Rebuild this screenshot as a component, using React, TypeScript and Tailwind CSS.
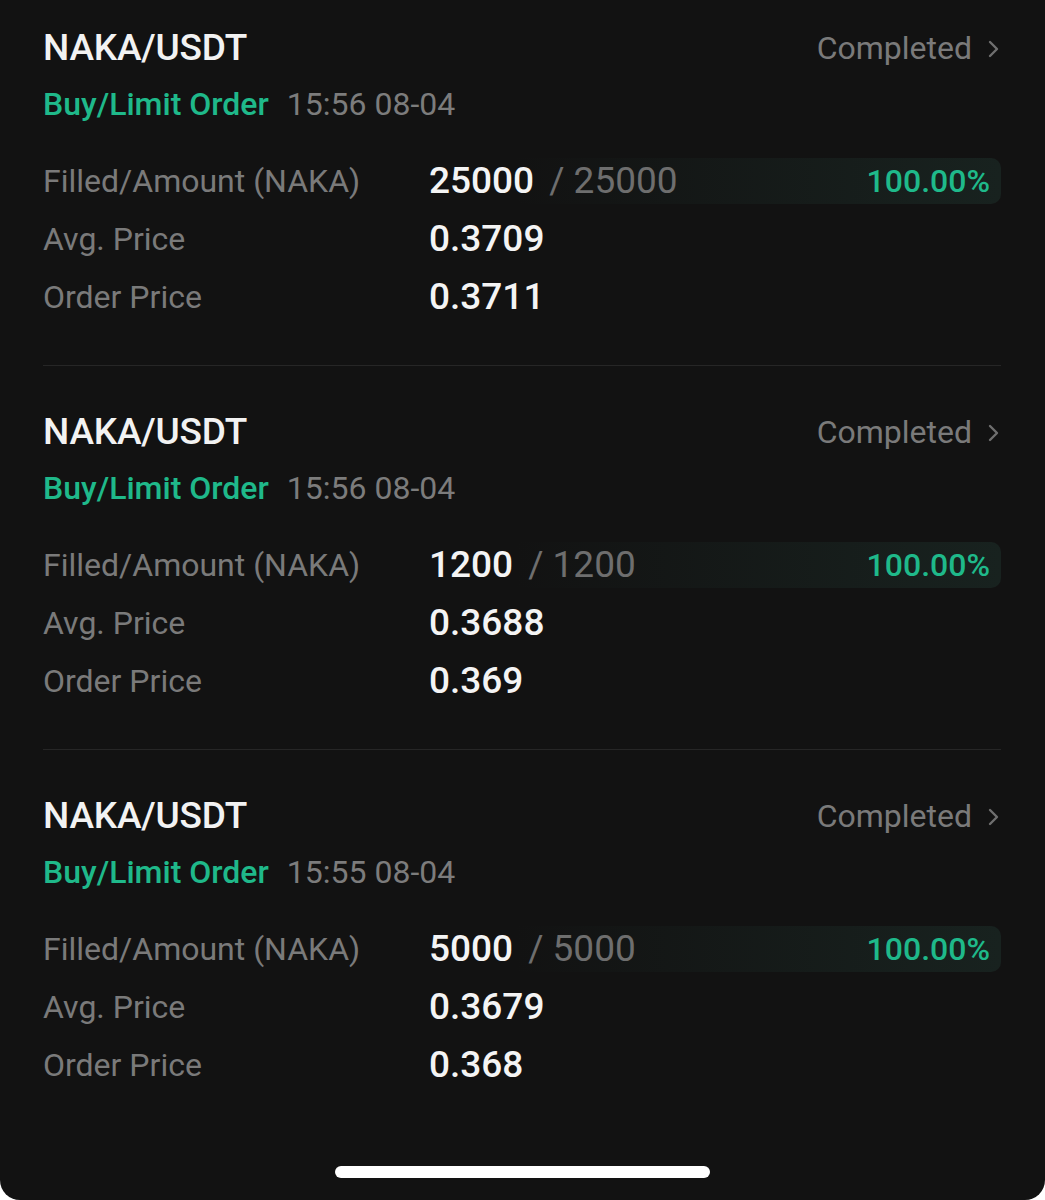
import React from "react";

type Order = {
  time: string;
  filled: string;
  amount: string;
  avg: string;
  price: string;
};

const orders: Order[] = [
  { time: "15:56 08-04", filled: "25000", amount: "25000", avg: "0.3709", price: "0.3711" },
  { time: "15:56 08-04", filled: "1200", amount: "1200", avg: "0.3688", price: "0.369" },
  { time: "15:55 08-04", filled: "5000", amount: "5000", avg: "0.3679", price: "0.368" },
];

function Chevron() {
  return (
    <svg width="14" height="20" viewBox="0 0 14 20" fill="none" className="ml-[15px] mt-[2px]">
      <path d="M3 3 L10 10 L3 17" stroke="#6f6f6f" strokeWidth="2.4" strokeLinecap="round" strokeLinejoin="round" />
    </svg>
  );
}

function OrderCard({ o, last }: { o: Order; last: boolean }) {
  return (
    <div className="flex flex-col">
      <div className="flex items-center justify-between h-[44px]">
        <span className="text-[37px] font-medium text-[#f2f2f2] tracking-[-0.2px]">NAKA/USDT</span>
        <span className="flex items-center text-[32px] text-[#7a7a7a]">
          Completed
          <Chevron />
        </span>
      </div>
      <div className="flex items-center h-[40px] mt-[14px] text-[32px]">
        <span className="font-medium text-[#1fb98a]">Buy/Limit Order</span>
        <span className="ml-[18px] text-[#7c7c7c]">{o.time}</span>
      </div>
      <div className="flex flex-col mt-[28px]">
        <div className="flex items-center h-[58px]">
          <span className="w-[386px] text-[32px] text-[#7a7a7a]">Filled/Amount (NAKA)</span>
          <div className="flex-1 h-[46px] flex items-center justify-between rounded-r-[10px] bg-gradient-to-r from-transparent from-[15%] to-[#18221f] pr-[11px]">
            <span className="text-[37px]">
              <span className="font-medium text-[#f4f4f4]">{o.filled}</span>
              <span className="text-[#6e6e6e] ml-[15px]">/ {o.amount}</span>
            </span>
            <span className="text-[32px] font-medium text-[#1fb98a]">100.00%</span>
          </div>
        </div>
        <div className="flex items-center h-[58px]">
          <span className="w-[386px] text-[32px] text-[#7a7a7a]">Avg. Price</span>
          <span className="text-[37px] font-medium text-[#f4f4f4]">{o.avg}</span>
        </div>
        <div className="flex items-center h-[58px]">
          <span className="w-[386px] text-[32px] text-[#7a7a7a]">Order Price</span>
          <span className="text-[37px] font-medium text-[#f4f4f4]">{o.price}</span>
        </div>
      </div>
      {!last && <div className="mt-[39px] mb-[44px] h-px bg-[#262626]" />}
    </div>
  );
}

export default function App() {
  return (
    <div className="w-[1045px] h-[1200px] bg-white">
      <div
        className="w-full h-full bg-[#121212] rounded-b-[20px] flex flex-col px-[43px] pt-[26px] pr-[44px]"
        style={{ fontFamily: "Roboto, 'Noto Sans', sans-serif" }}
      >
        {orders.map((o, i) => (
          <OrderCard key={i} o={o} last={i === orders.length - 1} />
        ))}
        <div className="flex-1" />
        <div className="flex justify-center mb-[22px]">
          <div className="w-[375px] h-[12px] rounded-full bg-white" />
        </div>
      </div>
    </div>
  );
}
